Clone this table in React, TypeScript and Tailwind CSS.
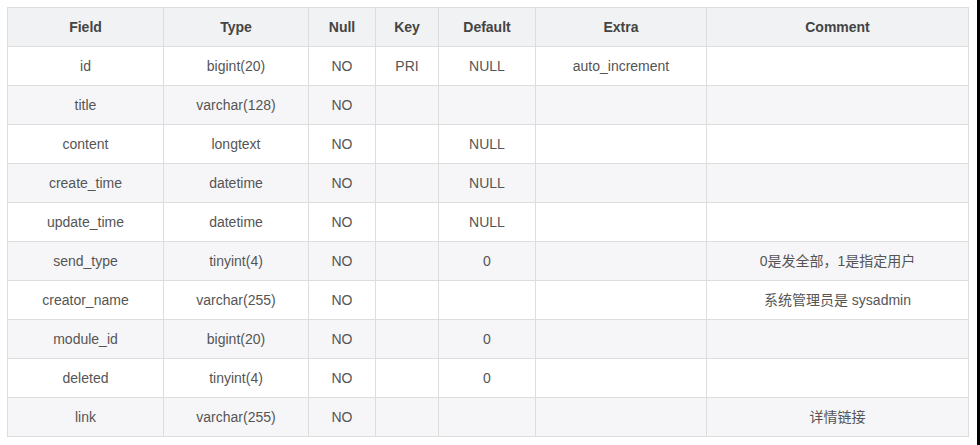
import React from "react";

const columns = [
  { label: "Field", w: "w-[156px]" },
  { label: "Type", w: "w-[145px]" },
  { label: "Null", w: "w-[67px]" },
  { label: "Key", w: "w-[63px]" },
  { label: "Default", w: "w-[97px]" },
  { label: "Extra", w: "w-[171px]" },
  { label: "Comment", w: "w-[262px]" },
];

const rows: string[][] = [
  ["id", "bigint(20)", "NO", "PRI", "NULL", "auto_increment", ""],
  ["title", "varchar(128)", "NO", "", "", "", ""],
  ["content", "longtext", "NO", "", "NULL", "", ""],
  ["create_time", "datetime", "NO", "", "NULL", "", ""],
  ["update_time", "datetime", "NO", "", "NULL", "", ""],
  ["send_type", "tinyint(4)", "NO", "", "0", "", "0是发全部，1是指定用户"],
  ["creator_name", "varchar(255)", "NO", "", "", "", "系统管理员是 sysadmin"],
  ["module_id", "bigint(20)", "NO", "", "0", "", ""],
  ["deleted", "tinyint(4)", "NO", "", "0", "", ""],
  ["link", "varchar(255)", "NO", "", "", "", "详情链接"],
];

export default function App() {
  return (
    <div
      className="flex w-[980px] h-[445px] bg-white"
      style={{ fontFamily: '"Liberation Sans", Arial, "Noto Sans CJK SC", sans-serif' }}
    >
      <div className="flex-1 pl-[7px] pt-[7px]">
        <table className="table-fixed border-collapse w-[962px] text-[14px] text-[#555]">
          <thead>
            <tr className="h-[39px] bg-[#f1f2f3]">
              {columns.map((c) => (
                <th key={c.label} className={`${c.w} border border-[#dddddd] font-bold text-[#444] text-center`}>
                  {c.label}
                </th>
              ))}
            </tr>
          </thead>
          <tbody>
            {rows.map((r, i) => (
              <tr key={i} className={`h-[39px] ${i % 2 === 1 ? "bg-[#f6f6f8]" : "bg-white"}`}>
                {r.map((cell, j) => (
                  <td key={j} className="border border-[#dddddd] text-center">
                    {cell}
                  </td>
                ))}
              </tr>
            ))}
          </tbody>
        </table>
      </div>
      <div className="w-[3px] bg-black" />
    </div>
  );
}
